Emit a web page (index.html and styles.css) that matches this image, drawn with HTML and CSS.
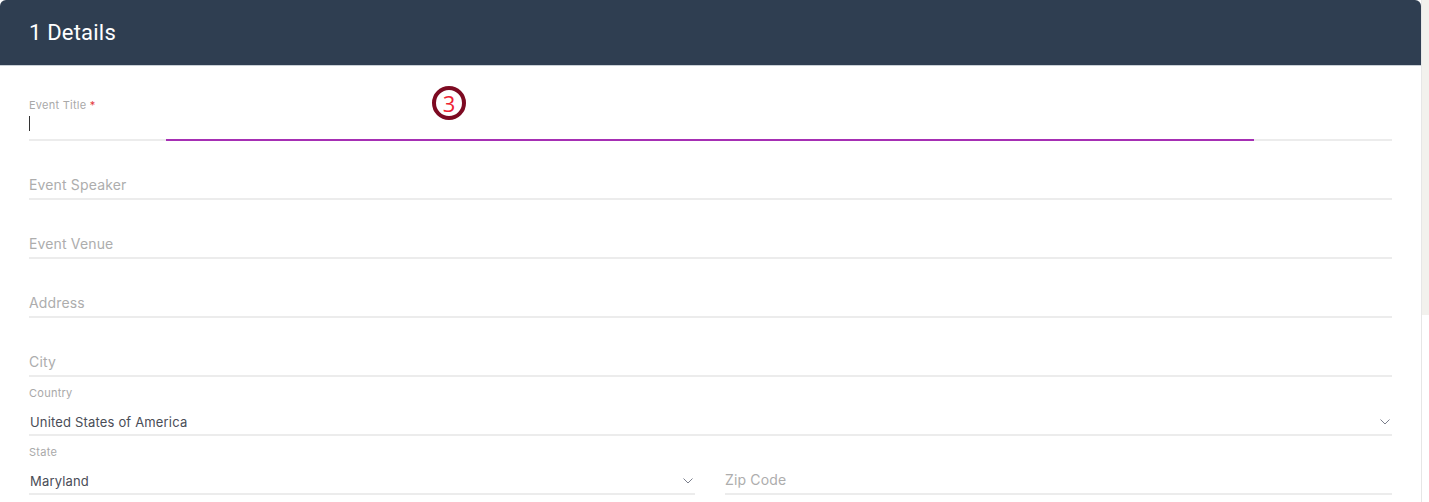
FILE: index.html
```html
<!DOCTYPE html>
<html lang="en">
<head>
    <meta charset="UTF-8">
    <title>Event Details</title>
    <link rel="stylesheet" href="styles.css">
</head>
<body>
    <div class="page">
        <div class="card">
            <div class="card-header">1 Details</div>
            <form class="card-body">
                <div class="field field-active">
                    <label class="field-label">Event Title <span class="required">*</span></label>
                    <span class="caret"></span>
                    <span class="focus-line"></span>
                    <span class="callout">3</span>
                </div>
                <div class="field"><span class="placeholder">Event Speaker</span></div>
                <div class="field"><span class="placeholder">Event Venue</span></div>
                <div class="field"><span class="placeholder">Address</span></div>
                <div class="field"><span class="placeholder">City</span></div>
                <div class="field">
                    <label class="field-label">Country</label>
                    <div class="select-value">
                        <span>United States of America</span>
                        <svg class="chevron" viewBox="0 0 10 6" width="10" height="6"><path d="M0.5 0.5 L5 5 L9.5 0.5" fill="none" stroke="#7b7f8c" stroke-width="1"/></svg>
                    </div>
                </div>
                <div class="field-row">
                    <div class="field">
                        <label class="field-label">State</label>
                        <div class="select-value">
                            <span>Maryland</span>
                            <svg class="chevron" viewBox="0 0 10 6" width="10" height="6"><path d="M0.5 0.5 L5 5 L9.5 0.5" fill="none" stroke="#7b7f8c" stroke-width="1"/></svg>
                        </div>
                    </div>
                    <div class="field"><span class="placeholder">Zip Code</span></div>
                </div>
            </form>
        </div>
        <div class="scroll-track"></div>
    </div>
</body>
</html>
```

FILE: styles.css
```css
html, body {
    margin: 0;
    height: 100%;
    overflow: hidden;
    background-color: #fff;
}

body {
    font-family: "Inter", "Liberation Sans", sans-serif;
}

.page {
    display: flex;
    height: 502px;
}

.card {
    width: 1421px;
    flex: none;
    border-right: 1px solid #e6e6e6;
    box-sizing: content-box;
}

.card-header {
    height: 65px;
    line-height: 66px;
    padding-left: 29px;
    background-color: #2f3e51;
    border-bottom: 1px solid #c9d0d6;
    border-radius: 6px 6px 0 0;
    color: #fff;
    font-family: "Roboto", sans-serif;
    font-size: 22px;
    letter-spacing: 0.2px;
}

.card-body {
    padding: 16px 29px 0;
}

/* Each field is 59px, underline included */
.field {
    position: relative;
    height: 59px;
    box-sizing: border-box;
    display: flex;
    flex-direction: column;
    justify-content: flex-end;
    border-bottom: 2px solid #ececec;
}

.field-row {
    display: grid;
    grid-template-columns: 666px 1fr;
    column-gap: 30px;
}

.field-label {
    font-size: 11px;
    line-height: 14px;
    letter-spacing: 0.25px;
    color: #a9a9a9;
}

.required {
    color: #e33b3b;
}

.placeholder {
    font-size: 14px;
    line-height: 20px;
    letter-spacing: 0.15px;
    padding-bottom: 3px;
    color: #adadad;
}

.select-value {
    display: flex;
    justify-content: space-between;
    align-items: center;
    height: 24px;
    margin-top: 9px;
    padding: 0 2px 0 1px;
    font-size: 13px;
    letter-spacing: 0.17px;
    color: #4a4d57;
}

.field > .field-label {
    margin-bottom: auto;
    margin-top: 9px;
}

.field-active > .field-label {
    margin-top: 16px;
}

.caret {
    position: absolute;
    left: 0;
    top: 34px;
    width: 1px;
    height: 15px;
    background-color: #333;
}

.focus-line {
    position: absolute;
    left: 137px;
    width: 1088px;
    bottom: -2px;
    height: 2px;
    background-color: #a62fb4;
}

.callout {
    position: absolute;
    left: 403px;
    top: 4px;
    width: 34px;
    height: 34px;
    box-sizing: border-box;
    border: 4px solid #7d0a22;
    border-radius: 50%;
    color: #ee2233;
    font-family: "Open Sans", sans-serif;
    font-size: 22px;
    line-height: 26px;
    text-align: center;
}

.scroll-track {
    width: 7px;
    height: 315px;
    background-color: #f2f1ed;
}
```
